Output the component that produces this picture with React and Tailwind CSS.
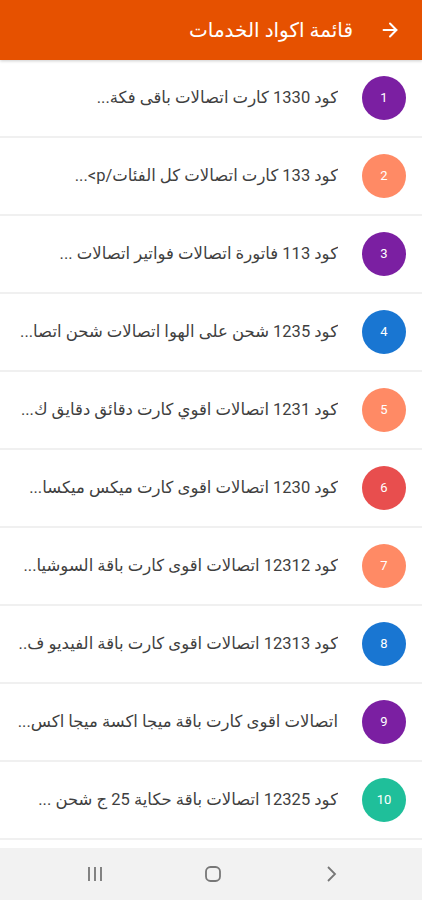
import { ArrowRight } from 'lucide-react'

const items = [
  { n: 1, text: 'كود 1330 كارت اتصالات باقى فكة...', color: 'bg-[#7b1fa2]' },
  { n: 2, text: 'كود 133 كارت اتصالات كل الفئات/p>...', color: 'bg-[#ff8a65]' },
  { n: 3, text: 'كود 113 فاتورة اتصالات فواتير اتصالات ...', color: 'bg-[#7b1fa2]' },
  { n: 4, text: 'كود 1235 شحن على الهوا اتصالات شحن اتصا...', color: 'bg-[#1976d2]' },
  { n: 5, text: 'كود 1231 اتصالات اقوي كارت دقائق دقايق ك...', color: 'bg-[#ff8a65]' },
  { n: 6, text: 'كود 1230 اتصالات اقوى كارت ميكس ميكسا...', color: 'bg-[#e84e4e]' },
  { n: 7, text: 'كود 12312 اتصالات اقوى كارت باقة السوشيا...', color: 'bg-[#ff8a65]' },
  { n: 8, text: 'كود 12313 اتصالات اقوى كارت باقة الفيديو ف..', color: 'bg-[#1976d2]' },
  { n: 9, text: 'اتصالات اقوى كارت باقة ميجا اكسة ميجا اكس...', color: 'bg-[#7b1fa2]' },
  { n: 10, text: 'كود 12325 اتصالات باقة حكاية 25 ج شحن ...', color: 'bg-[#1fbf9a]' },
]

export default function App() {
  return (
    <div
      dir="rtl"
      className="w-[422px] h-[900px] bg-white flex flex-col overflow-hidden"
      style={{ fontFamily: "Roboto, 'DejaVu Sans', sans-serif" }}
    >
      {/* Header */}
      <div className="h-[60px] bg-[#e65100] flex items-center pr-[21px] gap-[26px] shadow-[0_1px_3px_rgba(0,0,0,0.2)] z-10">
        <ArrowRight size={22} strokeWidth={2.2} className="text-white" />
        <h1 className="text-white text-[20px] font-medium">قائمة اكواد الخدمات</h1>
      </div>

      {/* List */}
      <div className="flex flex-col">
        {items.map((item) => (
          <div
            key={item.n}
            className="h-[78px] flex items-center pr-[16px] gap-[24px] border-b-2 border-[#f0f0f0]"
          >
            <div
              className={`w-[44px] h-[44px] rounded-full ${item.color} flex items-center justify-center shrink-0`}
            >
              <span className="text-white text-[13px]">{item.n}</span>
            </div>
            <p className="text-[#3f3f3f] text-[16.5px] whitespace-nowrap overflow-hidden">{item.text}</p>
          </div>
        ))}
      </div>

      <div className="flex-1" />

      {/* Nav bar */}
      <div dir="ltr" className="h-[52px] bg-[#f2f2f2] flex items-center pl-[85px] gap-[98px]">
        <svg width="20" height="18" viewBox="0 0 20 18" className="text-[#777]">
          <path d="M4 2v14M10 2v14M16 2v14" stroke="currentColor" strokeWidth="1.8" fill="none" />
        </svg>
        <svg width="20" height="20" viewBox="0 0 20 20" className="text-[#777]">
          <rect x="3" y="3" width="14" height="14" rx="4.5" stroke="currentColor" strokeWidth="1.8" fill="none" />
        </svg>
        <svg width="20" height="20" viewBox="0 0 20 20" className="text-[#777]">
          <path d="M7 3l7 7-7 7" stroke="currentColor" strokeWidth="1.8" fill="none" />
        </svg>
      </div>
    </div>
  )
}
